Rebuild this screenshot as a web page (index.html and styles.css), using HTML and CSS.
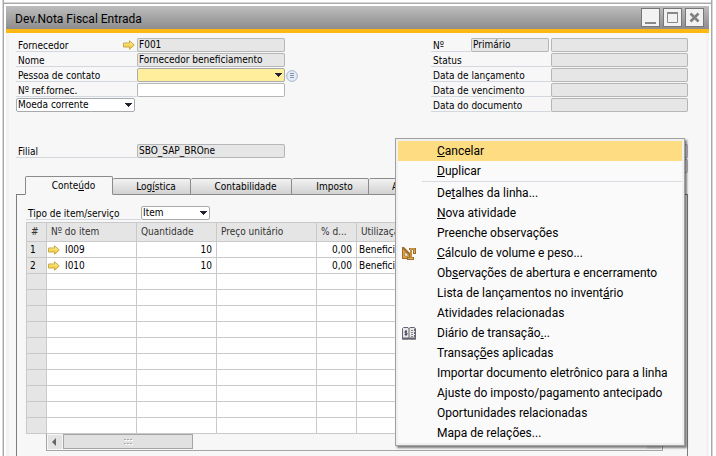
FILE: index.html
```html
<!DOCTYPE html>
<html lang="pt-BR">
<head>
<meta charset="utf-8">
<title>Dev.Nota Fiscal Entrada</title>
<link rel="stylesheet" href="styles.css">
</head>
<body>
<svg class="defs" width="0" height="0" aria-hidden="true">
  <defs>
    <linearGradient id="gold" x1="0" y1="0" x2="0" y2="1">
      <stop offset="0" stop-color="#fff3a0"/><stop offset="1" stop-color="#efbf22"/>
    </linearGradient>
    <symbol id="go" viewBox="0 0 12 10">
      <path d="M.5 3H6.500V.7L11.300 5 6.500 9.300V7H.5Z" fill="url(#gold)" stroke="#c9a94a"/>
    </symbol>
    <symbol id="drop" viewBox="0 0 7 4"><path d="M0 0H7V1H6V2H5V3H4V4H3V3H2V2H1V1H0Z" fill="#222230"/></symbol>
  </defs>
</svg>
<main class="window">
  <header class="titlebar">
    <h1>Dev.Nota Fiscal Entrada</h1>
    <div class="controls">
      <button type="button" aria-label="Minimizar"><svg width="17" height="17"><path d="M3 14H14" stroke="#888" stroke-width="2"/></svg></button>
      <button type="button" aria-label="Maximizar"><svg width="17" height="17"><path d="M3.500 3.500H13.500V13.500H3.500Z" fill="none" stroke="#888"/><path d="M3 4H14" stroke="#888" stroke-width="2"/></svg></button>
      <button type="button" aria-label="Fechar"><svg width="17" height="17"><path d="M4.500 4.500L12.500 12.500M12.500 4.500L4.500 12.500" stroke="#808080" stroke-width="2.600"/></svg></button>
    </div>
  </header>
  <div class="content">
    <div class="top">
      <section class="left">
        <div class="row"><label for="f1">Fornecedor</label><a class="go" href="#f1" aria-label="Abrir fornecedor"><svg width="12" height="10"><use href="#go"/></svg></a><input id="f1" value="F001" readonly></div>
        <div class="row"><label for="f2">Nome</label><input id="f2" value="Fornecedor beneficiamento" readonly></div>
        <div class="row"><label for="f3">Pessoa de contato</label><span class="pick wide"><select id="f3" class="focus"><option></option></select><svg width="7" height="4"><use href="#drop"/></svg></span><button class="list" type="button" aria-label="Lista"><svg width="12" height="12"><circle cx="6" cy="6" r="5.400" fill="#e4ebf8" stroke="#a9b4cc"/><path d="M4 3.500H8M4 5.500H8M4 7.500H8" stroke="#8993a8"/></svg></button></div>
        <div class="row"><label for="f4">Nº ref.fornec.</label><input id="f4" class="edit" value=""></div>
        <div class="row"><span class="pick currency"><select aria-label="Moeda"><option>Moeda corrente</option></select><svg width="7" height="4"><use href="#drop"/></svg></span></div>
      </section>
      <section class="right">
        <div class="row"><label class="short" for="r1">Nº</label><input class="series" value="Primário" aria-label="Série" readonly><input id="r1" readonly></div>
        <div class="row"><label for="r2">Status</label><input id="r2" readonly></div>
        <div class="row"><label for="r3">Data de lançamento</label><input id="r3" readonly></div>
        <div class="row"><label for="r4">Data de vencimento</label><input id="r4" readonly></div>
        <div class="row"><label for="r5">Data do documento</label><input id="r5" readonly></div>
      </section>
    </div>
    <div class="top branch">
      <section class="left"><div class="row"><label for="f6">Filial</label><input id="f6" value="SBO_SAP_BROne" readonly></div></section>
      <section class="right">
        <div class="row"><input aria-label="Valor" readonly></div>
        <div class="row"><input aria-label="Valor adicional" readonly></div>
      </section>
    </div>
    <div class="tabs" role="tablist">
      <button type="button" role="tab" aria-selected="true" class="tab active">Conte<u>ú</u>do</button>
      <button type="button" role="tab" class="tab t2">Log<u>í</u>stica</button>
      <button type="button" role="tab" class="tab t3">Contabilidade</button>
      <button type="button" role="tab" class="tab t4">Imposto</button>
      <button type="button" role="tab" class="tab t5">Anexos</button>
    </div>
    <section class="panel">
      <div class="row type"><label for="tp">Tipo de item/serviço</label><span class="pick"><select id="tp"><option>Item</option></select><svg width="7" height="4"><use href="#drop"/></svg></span></div>
      <table>
        <colgroup><col class="c1"><col class="c2"><col class="c3"><col class="c4"><col class="c5"><col></colgroup>
        <thead><tr><th>#</th><th>Nº do item</th><th>Quantidade</th><th>Preço unitário</th><th>% d...</th><th>Utilização</th></tr></thead>
        <tbody>
          <tr><td>1</td><td><a href="#i1" id="i1"><svg width="12" height="10"><use href="#go"/></svg>I009</a></td><td>10</td><td></td><td>0,00</td><td>Beneficiamento</td></tr>
          <tr><td>2</td><td><a href="#i2" id="i2"><svg width="12" height="10"><use href="#go"/></svg>I010</a></td><td>10</td><td></td><td>0,00</td><td>Beneficiamento</td></tr>
          <tr><td></td><td></td><td></td><td></td><td></td><td></td></tr>
          <tr><td></td><td></td><td></td><td></td><td></td><td></td></tr>
          <tr><td></td><td></td><td></td><td></td><td></td><td></td></tr>
          <tr><td></td><td></td><td></td><td></td><td></td><td></td></tr>
          <tr><td></td><td></td><td></td><td></td><td></td><td></td></tr>
          <tr><td></td><td></td><td></td><td></td><td></td><td></td></tr>
          <tr><td></td><td></td><td></td><td></td><td></td><td></td></tr>
          <tr><td></td><td></td><td></td><td></td><td></td><td></td></tr>
          <tr><td></td><td></td><td></td><td></td><td></td><td></td></tr>
          <tr><td></td><td></td><td></td><td></td><td></td><td></td></tr>
        </tbody>
      </table>
      <div class="scroll">
        <button type="button" aria-label="Rolar à esquerda"><svg width="14" height="14"><path d="M4 7L8 3V11Z" fill="#666"/></svg></button>
        <div class="thumb"><svg width="9" height="6"><path d="M0 .5H2M3 .5H5M6 .5H8M0 4.500H2M3 4.500H5M6 4.500H8" stroke="#aaa"/><path d="M1 1.500H3M4 1.500H6M7 1.500H9M1 5.500H3M4 5.500H6M7 5.500H9" stroke="#fff"/></svg></div>
        <button type="button" class="end" aria-label="Rolar à direita"><svg width="14" height="14"><path d="M10 7L6 3V11Z" fill="#666"/></svg></button>
      </div>
    </section>
  </div>
</main>
<div class="menu" role="menu">
  <button type="button" role="menuitem" class="on"><i></i><span><u>C</u>ancelar</span></button>
  <button type="button" role="menuitem"><i></i><span><u>D</u>uplicar</span></button>
  <hr>
  <button type="button" role="menuitem"><i></i><span>De<u>t</u>alhes da linha...</span></button>
  <button type="button" role="menuitem"><i></i><span><u>N</u>ova atividade</span></button>
  <button type="button" role="menuitem"><i></i><span>Preenche observações</span></button>
  <button type="button" role="menuitem"><i><svg width="14" height="13"><path d="M0 0H2L8 6V12H0Z" fill="#a06c2c"/><path d="M1 2L7 8V11H1Z" fill="#d9a04a"/><path d="M3 5L6 8V9H3Z" fill="#fff" stroke="#a06c2c" stroke-width=".6"/><path d="M7 1H14V7H11V3H10V10H12V13H5V10H8V3H7Z" fill="#a06c2c"/><path d="M8 2H13M9 2V11M6 11.500H11M12.500 3V6" fill="none" stroke="#e2ae59"/></svg></i><span><u>C</u>álculo de volume e peso...</span></button>
  <button type="button" role="menuitem"><i></i><span>Ob<u>s</u>ervações de abertura e encerramento</span></button>
  <button type="button" role="menuitem"><i></i><span>Lista de lançamentos no invent<u>á</u>rio</span></button>
  <button type="button" role="menuitem"><i></i><span>Atividades relacionadas</span></button>
  <button type="button" role="menuitem"><i><svg width="14" height="13"><path d="M.5 1.500L1.500 .5H6L7 1.500 8 .5H12L13.500 1.500V12H8L7 11.500 6 12H.5Z" fill="#e8e8e8" stroke="#666473"/><path d="M0 11.500H14" stroke="#666473" stroke-width="2"/><path d="M7 1V12" stroke="#666473"/><path d="M13 2V12" stroke="#666473" stroke-width="2" stroke-dasharray="2 1"/><path d="M9 3.500H11M9 5.500H11M9 7.500H11M9 9.500H11" stroke="#888"/><path d="M5 4.500H3V6H5V7.500H2.500M4 3V9" fill="none" stroke="#4b4b63"/></svg></i><span>Diário de transação<u>.</u>..</span></button>
  <button type="button" role="menuitem"><i></i><span>Transaç<u>õ</u>es aplicadas</span></button>
  <button type="button" role="menuitem"><i></i><span>Importar documento eletrônico para a linha</span></button>
  <button type="button" role="menuitem"><i></i><span>Ajuste do imposto/pagamento antecipado</span></button>
  <button type="button" role="menuitem"><i></i><span>Oportunidades relacionadas</span></button>
  <button type="button" role="menuitem"><i></i><span>Mapa de relações...</span></button>
</div>
</body>
</html>
```
FILE: styles.css
```css
* { box-sizing: border-box; }
body { margin: 0; height: 100vh; overflow: hidden; background: #fff; color: #000; font: 10px/14px "DejaVu Sans Condensed", "Noto Sans", sans-serif; }
button, input, select { font: inherit; color: inherit; margin: 0; border-radius: 0; }
button { padding: 0; border: 0; background: none; }
svg { display: block; flex: none; }
u { text-decoration-thickness: 1px; text-underline-offset: 1px; }
.defs { position: absolute; }

.window { display: flex; flex-direction: column; height: 100vh; margin: 0 3px 0 2px; padding: 6px 3px 0; border: solid #d8d8d8; border-width: 0 1px; background: linear-gradient(#fff 2px, #d8d8d8 2px 3px, #a8a8a8 3px 4px, #fff 4px); box-shadow: inset 1px 0 #a8a8a8, inset -1px 0 #a8a8a8; }
.titlebar { display: flex; justify-content: space-between; flex: none; height: 27px; padding: 0 5px 0 9px; border-bottom: 4px solid #fdb813; background: linear-gradient(#bdbdbd, #8d8d8d); }
.titlebar h1 { margin: 0; font: 12px/27px Roboto, sans-serif; }
.controls { display: flex; gap: 3px; padding-top: 2px; }
.controls button { width: 19px; height: 19px; border: 1px solid #777; background: #f2f2f2; }
.content { display: flex; flex-direction: column; flex: 1; min-height: 0; padding: 5px 21px 0 10px; background: #f7f7f7; box-shadow: inset 3px 0 #f2f2f2, inset -3px 0 #f2f2f2; }

.top { display: flex; justify-content: space-between; }
.branch { margin-top: 31px; }
.left { width: 283px; }
.right { width: 257px; }
.row { display: flex; height: 15px; }
.row label { flex: none; width: 121px; height: 14px; padding: 1px 0 0 2px; border-bottom: 1px solid #d2d8de; line-height: 14px; }
.right .row label { width: 120px; }
.right .row label.short { width: 40px; }
.row input { flex: none; width: 148px; height: 14px; padding: 0 2px; border: 0; border-radius: 2px; background: #e6e6e6; box-shadow: inset 0 0 0 1px #b4b6b8; outline: 0; line-height: 14px; }
.right .row input { width: 137px; margin-left: auto; }
.right .row input.series { width: 78px; margin-left: 0; }
.row input.edit { background: #fff; }
.go { width: 14px; margin-left: -14px; padding-top: 2px; }
.pick { display: grid; flex: none; width: 69px; height: 14px; align-items: center; }
.pick > * { grid-area: 1 / 1; }
.pick select { appearance: none; width: 100%; height: 14px; padding: 0 1px; border: 1px solid #a8abae; border-radius: 2px; background: #fff; line-height: 12px; }
.pick svg { justify-self: end; margin-right: 3px; pointer-events: none; }
.pick.wide { width: 148px; }
.pick.currency { width: 119px; }
.pick select.focus { background: #ffef9c; }
.list { width: 12px; margin-left: 1px; }

.tabs { display: flex; align-items: flex-end; flex: none; height: 18px; margin-top: 2px; padding-left: 9px; position: relative; }
.tab { height: 17px; margin-bottom: -1px; padding-left: 9px; border: 1px solid #8b8b8b; border-left: 0; border-radius: 2px 2px 0 0; background: linear-gradient(#f2f2f2, #d2d2d2); }
.tab.active { width: 88px; height: 19px; border-left: 1px solid #8b8b8b; border-bottom-color: #f7f7f7; background: #f7f7f7; }
.t2 { width: 78px; }
.t3 { width: 101px; }
.t4 { width: 77px; }
.t5 { width: 78px; padding-left: 23px; text-align: left; }
.panel { flex: 1; min-height: 0; padding: 11px 24px 0 9px; border: 1px solid #7e7e7e; border-bottom: 0; }
.row.type { height: 16px; }
.row.type label { width: 115px; }

table { width: 100%; table-layout: fixed; border-collapse: collapse; background: #fff; }
.c1 { width: 20px; } .c2 { width: 90px; } .c3 { width: 80px; } .c4 { width: 100px; } .c5 { width: 40px; }
th, td { height: 16px; padding: 0 4px; border: 1px solid #c9c9c9; white-space: nowrap; overflow: hidden; line-height: 14px; }
th { height: 19px; background: #e5e5e5; color: #333; font-weight: normal; text-align: left; }
td:first-child { padding: 0 3px; background: #e5e5e5; }
td:nth-child(2) { padding: 0 1px; }
td:nth-child(3), td:nth-child(5) { text-align: right; }
td:nth-child(6) { padding: 0 2px; }
td a { display: flex; align-items: center; gap: 5px; color: inherit; text-decoration: none; }
.scroll { display: flex; height: 17px; margin-left: 20px; border: solid #a5a5a5; border-width: 0 1px 1px; }
.scroll button { width: 14px; height: 14px; margin: 1px; background: #e3e3e3; }
.thumb { display: grid; place-items: center; width: 130px; height: 15px; border: 1px solid #a5a5a5; background: #e1e1e1; }
.scroll .end { margin-left: auto; }

.menu { position: absolute; left: 395px; top: 138px; width: 290px; padding: 2px; border: 1px solid #a0a0a0; background: #fafafa; box-shadow: inset 0 0 0 2px #f0f0f0, 2px 2px 2px rgba(0, 0, 0, .5); font: 12px/20px Roboto, sans-serif; }
.menu button { display: flex; align-items: center; width: 100%; height: 20px; text-align: left; white-space: nowrap; }
.menu i { width: 39px; padding-left: 4px; }
.menu .on { background: #fddc82; }
.menu hr { height: 1px; margin: 0 0 1px 24px; border: 0; background: #d7dce2; }
```
